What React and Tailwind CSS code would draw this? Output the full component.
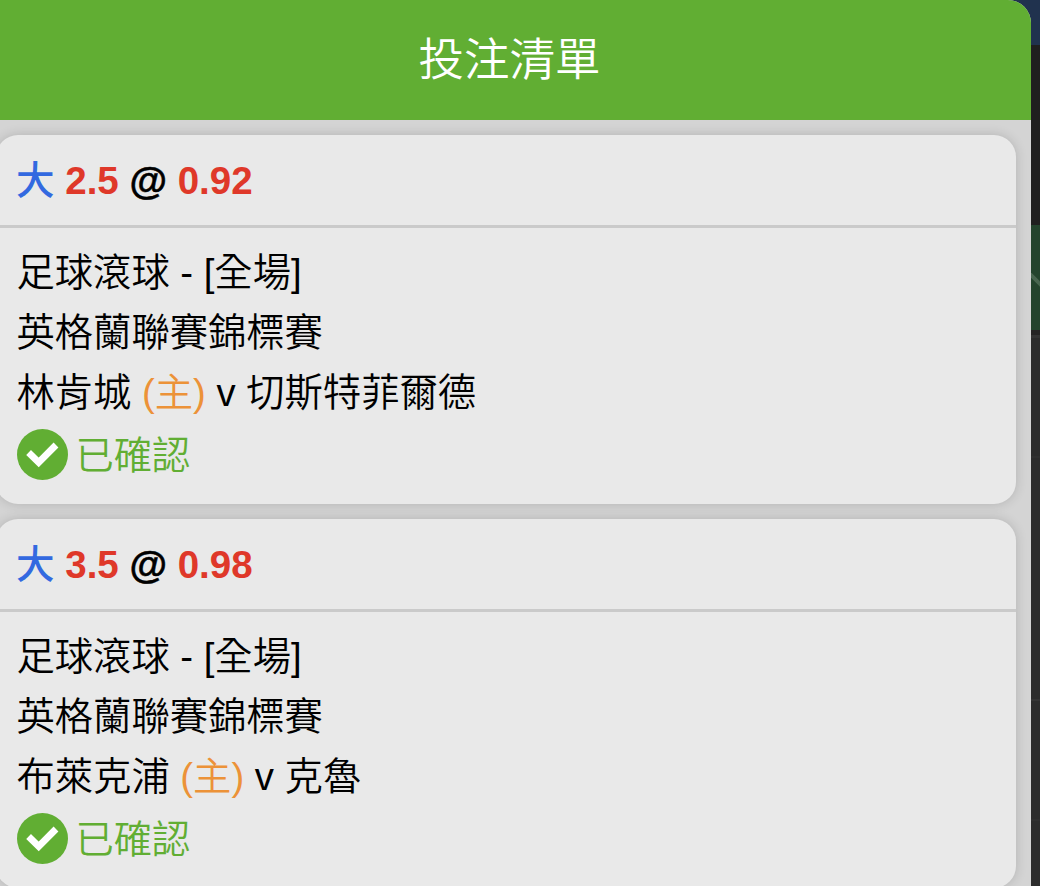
const bets = [
  { line: '2.5', odds: '0.92', home: '林肯城', away: '切斯特菲爾德' },
  { line: '3.5', odds: '0.98', home: '布萊克浦', away: '克魯' },
];

const CheckIcon = () => (
  <svg className="w-[51px] h-[51px] shrink-0" viewBox="0 0 51 51">
    <circle cx="25.5" cy="25.5" r="25.5" fill="#61ae33" />
    <path d="M11.6 23.5 L21.7 33.4 L39 16" fill="none" stroke="#fff" strokeWidth="6.8" />
  </svg>
);

const BetCard = ({ bet }) => (
  <div className="h-[369px] shrink-0 rounded-[22px] bg-[#e9e9e9] shadow-[0_0_12px_rgba(0,0,0,0.16)]">
    <div className="h-[93px] border-b-[3px] border-[#cacaca] pl-5 text-[38.5px] leading-[92px] font-bold text-[#df3829]">
      <span className="text-[#3369e0] font-medium">大</span> {bet.line}{' '}
      <span className="text-black [-webkit-text-stroke:0.5px_black]">@</span> {bet.odds}
    </div>
    <div className="pl-[20.5px] pt-[15px] leading-[60px] text-black">
      <p>足球滾球 - [全場]</p>
      <p>英格蘭聯賽錦標賽</p>
      <p>
        {bet.home} <span className="text-[#ec9238]">(主)</span> v {bet.away}
      </p>
      <div className="flex items-center gap-2 h-[63px] text-[#61ae33]">
        <CheckIcon />
        <span className="pt-0.5">已確認</span>
      </div>
    </div>
  </div>
);

const App = () => {
  return (
    <div className="flex h-[886px] w-[1040px] overflow-hidden bg-[#2c2c2c] font-['Liberation_Sans','Noto_Sans_CJK_TC',sans-serif] text-[38.3px] font-[350] whitespace-nowrap">
      <div className="relative z-10 -ml-3 w-[1043px] shrink-0">
        <div className="absolute top-0 right-0 h-8 w-8 bg-[#20324e]" />
        <div className="relative h-[886px] overflow-hidden rounded-tr-[23px] bg-[#d4d4d4]">
          <h1 className="h-[120px] bg-[#61ae33] text-center text-[45.5px] leading-[121px] font-[350] text-white">投注清單</h1>
          <div className="flex flex-col gap-[15px] pt-[15px] pr-[15px] pl-2">
            {bets.map((bet) => (
              <BetCard key={bet.line} bet={bet} />
            ))}
          </div>
        </div>
      </div>
      <div className="flex flex-1 flex-col">
        <div className="h-[45px] bg-[#20324e]" />
        <div className="h-[180px] bg-[#201f1f]" />
        <div className="h-[105px] bg-[#24442d]">
          <svg className="h-full w-full" viewBox="0 0 9 105">
            <path d="M-2 48 L11 61" stroke="#496650" strokeWidth="4" />
          </svg>
        </div>
        <div className="h-[5px] bg-[#252424]" />
        <div className="h-[3px] bg-[#343434]" />
        <div className="mt-[118px] h-[2px] bg-[#303030]" />
        <div className="mt-[241px] h-[2px] bg-[#353535]" />
        <div className="mt-[118px] h-[2px] bg-[#303030]" />
      </div>
    </div>
  );
};

export default App;
